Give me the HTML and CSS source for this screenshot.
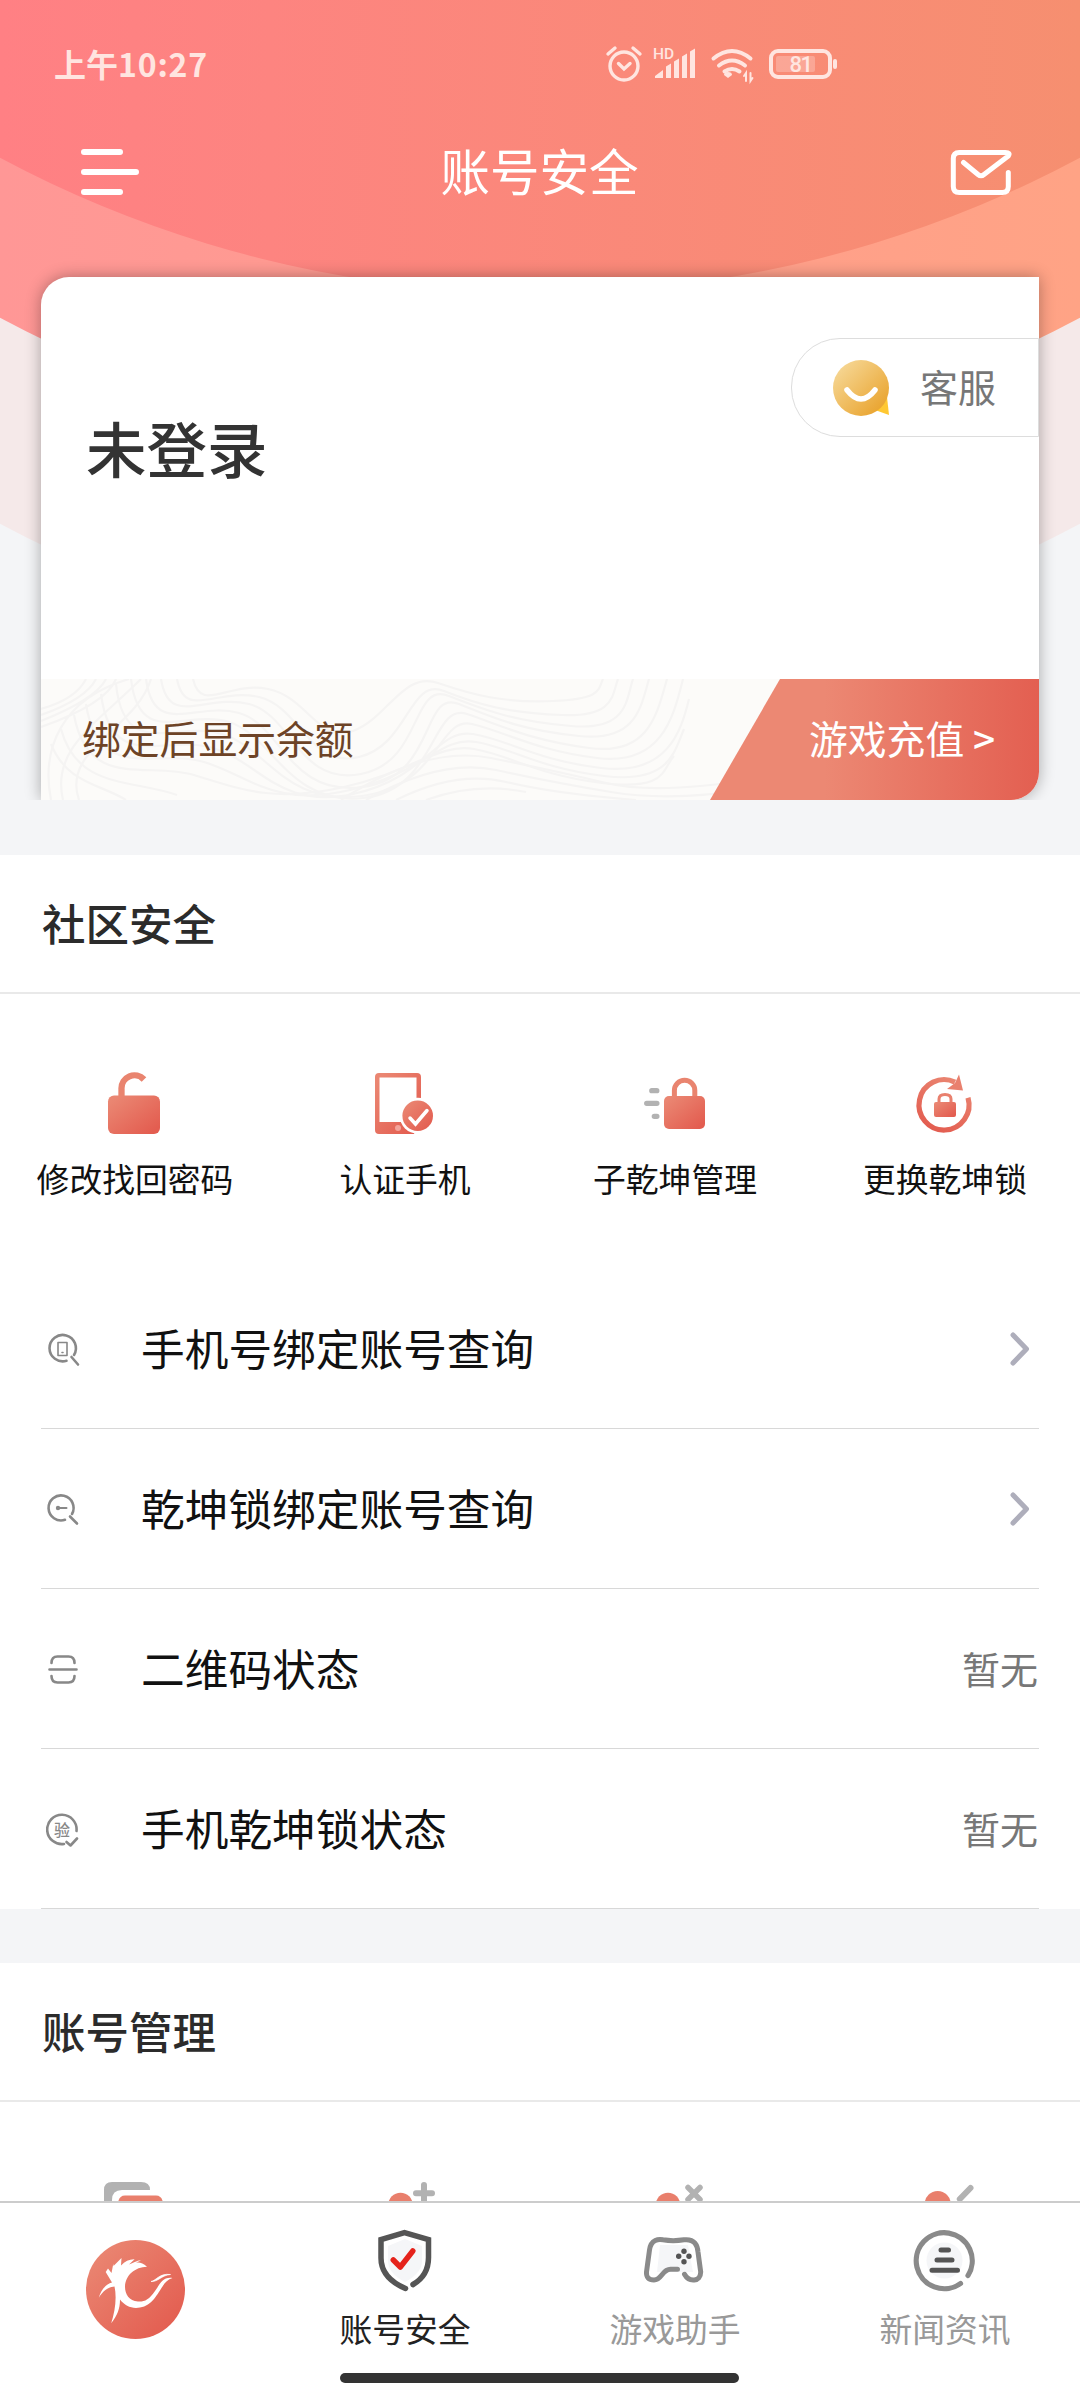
FILE: index.html
```html
<!DOCTYPE html>
<html lang="zh-CN">
<head>
<meta charset="utf-8">
<title>账号安全</title>
<link rel="stylesheet" href="styles.css">
</head>
<body>
<svg class="defs" width="0" height="0" aria-hidden="true">
  <defs>
    <linearGradient id="coral" x1="0" y1="0" x2="1" y2="1"><stop offset="0.1" stop-color="#ea8672"/><stop offset="0.9" stop-color="#e35d50"/></linearGradient>
    <linearGradient id="coralRing" x1="0.8" y1="0" x2="0.3" y2="1"><stop offset="0" stop-color="#ea8672"/><stop offset="1" stop-color="#e35d50"/></linearGradient>
    <linearGradient id="gold" x1="0.1" y1="0.1" x2="0.9" y2="0.9"><stop offset="0" stop-color="#f6d795"/><stop offset="1" stop-color="#e9a32d"/></linearGradient>
  </defs>
</svg>
<div class="screen">
  <section class="hero">
    <svg class="hero-bg" width="1080" height="855" viewBox="0 0 1080 855">
      <defs>
        <linearGradient id="g1" gradientUnits="userSpaceOnUse" x1="0" y1="0" x2="1080" y2="0"><stop offset="0" stop-color="#ff8084"/><stop offset="0.25" stop-color="#fd8480"/><stop offset="1" stop-color="#f68f70"/></linearGradient>
        <linearGradient id="g2" gradientUnits="userSpaceOnUse" x1="0" y1="0" x2="1080" y2="0"><stop offset="0" stop-color="#ff9796"/><stop offset="1" stop-color="#ffa385"/></linearGradient>
      </defs>
      <circle cx="540" cy="-487" r="1146" fill="#f5e9e9"/>
      <circle cx="540" cy="-693" r="1146" fill="url(#g2)"/>
      <circle cx="540" cy="-853" r="1146" fill="url(#g1)"/>
    </svg>
    <div class="status">
      <span class="clock">上午<b>10:27</b></span>
      <svg width="240" height="60" viewBox="604 34 240 60" fill="none" stroke="#ffe5e0" stroke-linecap="round">
        <circle cx="624" cy="66" r="14" stroke-width="3.4"/><path d="M618.500 63.500 624 69l6-5.500M608 54l7-6M640 54l-7-6" stroke-width="3.4"/>
        <text x="653" y="59" font-size="15.500" font-weight="500" class="svg-text">HD</text>
        <g fill="#ffe5e0" stroke="none"><path d="M655 78v-2l8-6v8zM666 66.500l5-3V78h-5zM674 61.500l5-3V78h-5zM682 56.500l5-3V78h-5zM690 51.500l5-3V78h-5z"/><path d="M728 78l-4-3q0-3 4-3t4 3l-4 3z"/></g>
        <path d="M713.500 58.500q18.500-15 37 0M719 65.500q13-10 26 0M724.500 71.500q7.500-5 15 0" stroke-width="4"/>
        <path d="M746 81v-8l-2 3M750.500 73v8l2-3" stroke-width="2"/>
        <rect x="771" y="51" width="59" height="26" rx="7" stroke-width="4"/><rect x="776" y="56" width="39" height="16" rx="2" fill="#ffe5e0" opacity=".3" stroke="none"/><path d="M835 61v6" stroke-width="4"/>
        <text x="789.500" y="72" font-size="22" font-weight="500" letter-spacing="-1.500" class="svg-text">81</text>
      </svg>
    </div>
    <header class="topbar">
      <svg width="62" height="52" viewBox="78 147 62 52" stroke="#fff" stroke-width="6" stroke-linecap="round"><path d="M84 152h36M84 172h52M84 192h36"/></svg>
      <h1>账号安全</h1>
      <svg width="64" height="52" viewBox="948 147 64 52" fill="none" stroke="#fff" stroke-width="5" stroke-linecap="round" stroke-linejoin="round"><path d="M1008.300 172.500v14q0 6-6 6h-43q-6 0-6-6v-28q0-6 6-6h46q5.500 0 3 3.500L984 174.500q-3 2.500-6 0L963.500 162.500"/></svg>
    </header>
    <div class="card">
      <div class="card-main">
        <h2>未登录</h2>
        <div class="service">
          <svg width="58" height="58" viewBox="0 0 58 58"><path d="M43 51l12-13 2 18z" fill="#ffc832"/><circle cx="29" cy="29" r="28" fill="url(#gold)"/><path d="M15 31q14 18 28 0" fill="none" stroke="#fff" stroke-width="5.500" stroke-linecap="round"/></svg>
          <span>客服</span>
        </div>
      </div>
      <div class="balance">
        <svg class="contours" width="740" height="121" viewBox="0 0 740 121" fill="none" stroke="#f5f4f3" stroke-width="2.200">
          <path d="M0 30Q35 20 45 0M0 36Q45 20 55 0M0 42Q55 20 65 0M0 48Q65 25 75 0M10 121C0 70 20 20 88 0M22 121C10 70 55 45 100 0M38 121C20 70 95 50 110 0"/>
          <path d="M152 0c8 35 35 2 75 10s50 55 85 42 50-60 85-48 65 20 115 18 45-12 50-22"/>
          <path d="M136 0c8 42 40 8 82 18s50 72 100 60 50-80 85-66 65 22 118 24 50-20 56-36"/>
          <path d="M120 0c8 50 45 14 88 25s50 82 112 70 50-93 88-78 65 25 122 30 55-26 62-47"/>
          <path d="M105 0c8 60 50 22 93 34s50 84 124 74 58-98 96-83 62 26 120 32 62-30 70-57"/>
          <path d="M90 0c8 70 55 30 98 43s60 84 134 76 68-96 104-84 62 26 122 34 68-34 78-69"/>
          <path d="M75 5c8 78 60 36 106 50s62 72 140 62 76-80 110-72 62 26 125 34 76-38 86-79"/>
          <path d="M60 15c10 80 65 40 112 54s66 62 140 46 84-66 120-60 62 26 128 34 80-36 88-69"/>
          <path d="M45 25c12 80 72 44 118 58s70 46 146 28 90-54 126-48 62 26 128 34 70-24 80-47"/>
          <path d="M33 36c14 76 74 46 120 60s80 28 150 12 94-44 130-38 62 26 128 34 60-14 72-27"/>
          <path d="M20 50c16 60 70 50 116 66M10 65c16 40 50 40 75 56M300 121q85-55 150-42t115 25 150-4M325 121q75-42 130-30t115 22 140-3M355 121q60-30 110-18t130 18M385 121q50-18 100-8"/>
        </svg>
        <span class="balance-text">绑定后显示余额</span>
        <div class="recharge"><span>游戏充值 <b>&gt;</b></span></div>
      </div>
    </div>
  </section>

  <section class="panel security">
    <h3>社区安全</h3>
    <div class="grid">
      <div class="tile">
        <svg width="66" height="66" viewBox="0 0 66 66"><path d="M19.500 26V17A13 13 0 0 1 42 7.500" fill="none" stroke="#e9846f" stroke-width="6.300"/><rect x="6" y="23.500" width="52" height="38.500" rx="6" fill="url(#coral)"/></svg>
        <span>修改找回密码</span>
      </div>
      <div class="tile">
        <svg width="66" height="66" viewBox="0 0 66 66"><path fill-rule="evenodd" d="M7 1h38q4 0 4 4v38L42 62H7q-4 0-4-4V5q0-4 4-4zM7.500 5.500v44.500H44.500V5.500z" fill="url(#coral)"/><circle cx="26" cy="56" r="3" fill="#f3a49b"/><circle cx="45.700" cy="43.700" r="18" fill="#fff"/><circle cx="45.700" cy="43.700" r="15.300" fill="url(#coral)"/><path d="M38 46l5.500 6L55 38.500" fill="none" stroke="#fff" stroke-width="3.500" stroke-linecap="round"/></svg>
        <span>认证手机</span>
      </div>
      <div class="tile">
        <svg width="66" height="66" viewBox="0 0 66 66"><path d="M9.800 18.700h5M4.700 31.300h10.200M12.300 44.300h2.600" stroke="#b2b2b2" stroke-width="5.300" stroke-linecap="round"/><path d="M32.400 26v-7.500a10.200 10.300 0 0 1 20.400 0V26" fill="none" stroke="#e9846f" stroke-width="5"/><rect x="22" y="24" width="41" height="33" rx="5" fill="url(#coral)"/></svg>
        <span>子乾坤管理</span>
      </div>
      <div class="tile">
        <svg width="66" height="66" viewBox="0 0 66 66"><path d="M43 10.200A25 25.200 0 1 0 56 25.700" fill="none" stroke="url(#coralRing)" stroke-width="5.200"/><path d="M47 2.500l4 16-16-1.500 8-6z" fill="#e9806e"/><path d="M27 31v-4q0-4.500 6-4.500t6 4.500v4" fill="none" stroke="#e9806e" stroke-width="3"/><rect x="22" y="30" width="22" height="15" rx="2" fill="url(#coral)"/></svg>
        <span>更换乾坤锁</span>
      </div>
    </div>
    <ul class="list">
      <li>
        <svg class="lead" width="36" height="36" viewBox="0 0 36 36"><path d="M20.500 29.800A13.200 13.200 0 1 1 28 24M25.500 26l6.500 7.500"/><path d="M12 11.500h9v13h-9zM16 21.500h1" stroke-width="1.600"/></svg>
        <span class="name">手机号绑定账号查询</span>
        <svg class="chev" width="24" height="36" viewBox="0 0 24 36"><path d="M4 4l13.500 14L4 32"/></svg>
      </li>
      <li>
        <svg class="lead" width="36" height="36" viewBox="0 0 36 36"><path d="M19 28.800A12.500 12.500 0 1 1 26 23M24 25.500l7 7"/><path d="M12 17h8.500" stroke-width="2"/><circle cx="12" cy="17" r="2.200" class="dot"/></svg>
        <span class="name">乾坤锁绑定账号查询</span>
        <svg class="chev" width="24" height="36" viewBox="0 0 24 36"><path d="M4 4l13.500 14L4 32"/></svg>
      </li>
      <li>
        <svg class="lead" width="36" height="36" viewBox="0 0 36 36"><path d="M5.500 12q0-6.500 6-6.500h11q6 0 6 6.500M5.500 25q0 6.500 6 6.500h11q6 0 6-6.500M3.500 18.500h27"/></svg>
        <span class="name">二维码状态</span><span class="value">暂无</span>
      </li>
      <li>
        <svg class="lead" width="36" height="36" viewBox="0 0 36 36"><path d="M18 33A14.700 14.700 0 1 1 30.500 20M20.500 31l4 3.500 6.500-7"/><text x="8" y="24.500" font-size="16" class="svg-text badge">验</text></svg>
        <span class="name">手机乾坤锁状态</span><span class="value">暂无</span>
      </li>
    </ul>
  </section>

  <section class="panel manage">
    <h3>账号管理</h3>
    <div class="peek">
      <svg width="66" height="22" viewBox="0 0 66 22"><path d="M2 22V9q0-8 8-8h29q9 0 9 8H20q-10 0-10 10v3z" fill="#b2b2b2"/><path d="M16 22q1-7.500 7-7.500h31q6 0 7 7.500z" fill="#e97f6c"/></svg>
      <svg width="66" height="22" viewBox="0 0 66 22"><circle cx="28.500" cy="24" r="12.300" fill="#e97f6c"/><path d="M44 12.300h16M52 4v22" stroke="#b2b2b2" stroke-width="6" stroke-linecap="round"/></svg>
      <svg width="66" height="22" viewBox="0 0 66 22"><circle cx="26" cy="24" r="12.300" fill="#e97f6c"/><path d="M46 6.500l12 12M58 6.500L46 18.500" stroke="#b2b2b2" stroke-width="5.500" stroke-linecap="round"/></svg>
      <svg width="66" height="22" viewBox="0 0 66 22"><circle cx="25.700" cy="23" r="13" fill="#e97f6c"/><path d="M47.800 18L58.500 7" stroke="#b2b2b2" stroke-width="6" stroke-linecap="round"/></svg>
    </div>
  </section>

  <nav class="tabbar">
    <div class="tab logo">
      <svg width="99" height="99" viewBox="0 0 99 99"><circle cx="49.500" cy="49.500" r="49.500" fill="url(#coral)"/><path fill="#fff" d="M61 26.700C57 23 54 22 50 22.500L55 20.500C52 20 49 22 43 24.500L48.600 19.300Q41 19 35 25.500L35.500 18 27.500 26 27.300 23.700 25.500 33 22 28.500 19.700 32 26 42.500C20 44 15 50 12.800 57.700 17 51 22 47 28.500 46.500 31 58 29 71 25.200 83.300 31 76 34 69 34 59.500 39 66 46 69 54 67.500 66 66 72 53 76.500 46.500 79 42 82 39.500 86.500 38 77 36.500 74 44 69 51 63 60 58 62 52 61.500 43 61 39 54 39 46.700 39.500 35 49 27 61 26.700z"/><path d="M65 41.500C70 41 73 33 84.500 34.500 76 35 72 42 65 41.500z" fill="#fff" stroke="#fff" stroke-width=".7"/></svg>
    </div>
    <div class="tab active">
      <svg width="66" height="66" viewBox="0 0 66 66"><path d="M33 10l17 7v15q0 12-17 21-17-9-17-21V17z" fill="#f5f6f8"/><path d="M33.500 59.500Q9 49 9 29V10.500L32.500 3.500 56.500 10.500v18q0 18-15.500 27" fill="none" stroke="#555" stroke-width="5.500" stroke-linecap="round"/><path d="M21.300 31l7 7 12.500-16" fill="none" stroke="#e5231c" stroke-width="5.500" stroke-linecap="round" stroke-linejoin="round"/></svg>
      <span>账号安全</span>
    </div>
    <div class="tab">
      <svg width="66" height="66" viewBox="0 0 66 66"><path d="M18 16h28l5 27H15z" fill="#f5f6f8"/><path d="M35.500 40.300h-7C20 40.300 20 51 12 51Q4 51 4.500 43L7.500 21C9 10 17 10 21 10.800Q31 12.500 42 10.800C53 9.500 55.500 17 56 23L58.700 43C58.700 53 47 53.500 42.500 45.300" fill="none" stroke="#8a8a8a" stroke-width="5" stroke-linecap="round"/><g fill="#555"><circle cx="42" cy="22.300" r="2.700"/><circle cx="36.700" cy="27.300" r="2.700"/><circle cx="47" cy="27.300" r="2.700"/><circle cx="42" cy="32.700" r="2.700"/></g></svg>
      <span>游戏助手</span>
    </div>
    <div class="tab">
      <svg width="66" height="66" viewBox="0 0 66 66"><circle cx="32.500" cy="31.500" r="18" fill="#f5f6f8"/><path d="M48.500 54.500A28 28 0 1 1 56 46.500" fill="none" stroke="#8a8a8a" stroke-width="5.200" stroke-linecap="round"/><path d="M29 21h7.500M25 31h15M20 41.300h25.500" stroke="#555" stroke-width="5" stroke-linecap="round"/></svg>
      <span>新闻资讯</span>
    </div>
    <i class="home"></i>
  </nav>
</div>
</body>
</html>
```
FILE: styles.css
```css
* { box-sizing: border-box; margin: 0; padding: 0; }
body { width: 1080px; background: #f4f5f7; font-family: "Noto Sans CJK SC", sans-serif; color: #111; }
svg { display: block; flex: none; }
h1, h2, h3 { white-space: nowrap; }
.defs { position: absolute; }
.screen { display: flex; flex-direction: column; width: 1080px; height: 2400px; overflow: hidden; }
.svg-text { fill: #ffe5e0; stroke: none; font-family: Roboto, "Noto Sans CJK SC", sans-serif; }
.badge { fill: #888; font-weight: 500; }

.hero { position: relative; height: 855px; flex: none; background: #f4f5f7; isolation: isolate; }
.hero-bg { position: absolute; inset: 0; z-index: -1; }
.status { display: flex; justify-content: space-between; align-items: center; height: 128px; padding: 0 236px 0 54px; }
.clock { padding-bottom: 2px; color: #ffe5e0; font-size: 32px; font-weight: 700; line-height: 40px; }
.clock b { font-weight: 700; letter-spacing: .8px; }
.topbar { display: flex; justify-content: space-between; align-items: center; height: 90px; padding: 0 68px 0 78px; }
.topbar h1 { margin-left: -9px; padding-bottom: 6px; color: #fff; font-size: 49.500px; font-weight: 400; line-height: 60px; }
.card { width: 998px; height: 523px; margin: 59px 0 0 41px; border-radius: 28px 0 28px 0; background: #fff; box-shadow: 0 0 16px rgba(0, 0, 0, .32); clip-path: inset(-20px -20px 0 -20px); }
.card-main { display: flex; justify-content: space-between; height: 402px; padding: 61px 0 0 45px; }
.card-main h2 { margin-top: 64px; color: #333; font-size: 60.500px; font-weight: 500; line-height: 90px; }
.service { display: flex; align-items: center; gap: 30px; width: 248px; height: 99px; padding-left: 40px; border: 1px solid #ddd; border-radius: 49px 0 0 49px; color: #777; font-size: 38px; }
.service span { padding-bottom: 4px; }
.balance { position: relative; display: flex; align-items: center; justify-content: space-between; height: 121px; border-radius: 0 0 28px 0; overflow: hidden; background: #fcfbf9; isolation: isolate; }
.contours { position: absolute; left: 0; top: 0; z-index: -1; }
.balance-text { padding: 0 0 5px 41px; color: #6d4326; font-size: 38.800px; }
.recharge { display: flex; align-items: center; width: 329px; height: 121px; padding: 0 0 5px 99px; background: linear-gradient(90deg, #ec8873 35%, #e35f51); clip-path: polygon(70px 0, 100% 0, 100% 100%, 0 100%); color: #fff; font-size: 38.800px; white-space: nowrap; }
.recharge b { font-weight: 500; }

.panel { flex: none; background: #fff; }
.panel h3 { height: 139px; padding-left: 42px; border-bottom: 2px solid #e9e9e9; color: #2b2b2b; font-size: 43.500px; font-weight: 500; line-height: 136px; }
.security { height: 1054px; }
.grid { display: grid; grid-template-columns: repeat(4, 270px); height: 275px; padding-top: 78px; }
.tile { display: flex; flex-direction: column; align-items: center; gap: 16px; }
.tile span { font-size: 32.800px; line-height: 48px; white-space: nowrap; }
.list { padding: 0 41px; list-style: none; }
.list li { display: flex; align-items: center; height: 160px; border-bottom: 1px solid #d8d8d8; }
.lead { margin: 0 59px 0 5px; fill: none; stroke: #888; stroke-width: 2.600; stroke-linecap: round; stroke-linejoin: round; }
.lead .dot { fill: #888; stroke: none; }
.list .name { flex: 1; padding-bottom: 4px; font-size: 43.700px; }
.value { padding: 0 1px 2px 0; color: #777; font-size: 38px; }
.chev { margin-right: 6px; fill: none; stroke: #aeaebb; stroke-width: 5; stroke-linecap: round; stroke-linejoin: round; }

.manage { height: 238px; margin-top: 54px; overflow: hidden; }
.peek { display: grid; grid-template-columns: repeat(4, 270px); justify-items: center; padding-top: 79px; }

.tabbar { position: relative; display: grid; grid-template-columns: repeat(4, 270px); flex: none; height: 199px; border-top: 2px solid #ccc; background: #fff; }
.tab { display: flex; flex-direction: column; align-items: center; gap: 9px; padding-top: 26px; color: #999; font-size: 32.800px; line-height: 48px; }
.tab.logo { padding-top: 37px; }
.tab.active { color: #222; }
.home { position: absolute; left: 340px; bottom: 17px; width: 399px; height: 10px; border-radius: 5px; background: #333; }
```
